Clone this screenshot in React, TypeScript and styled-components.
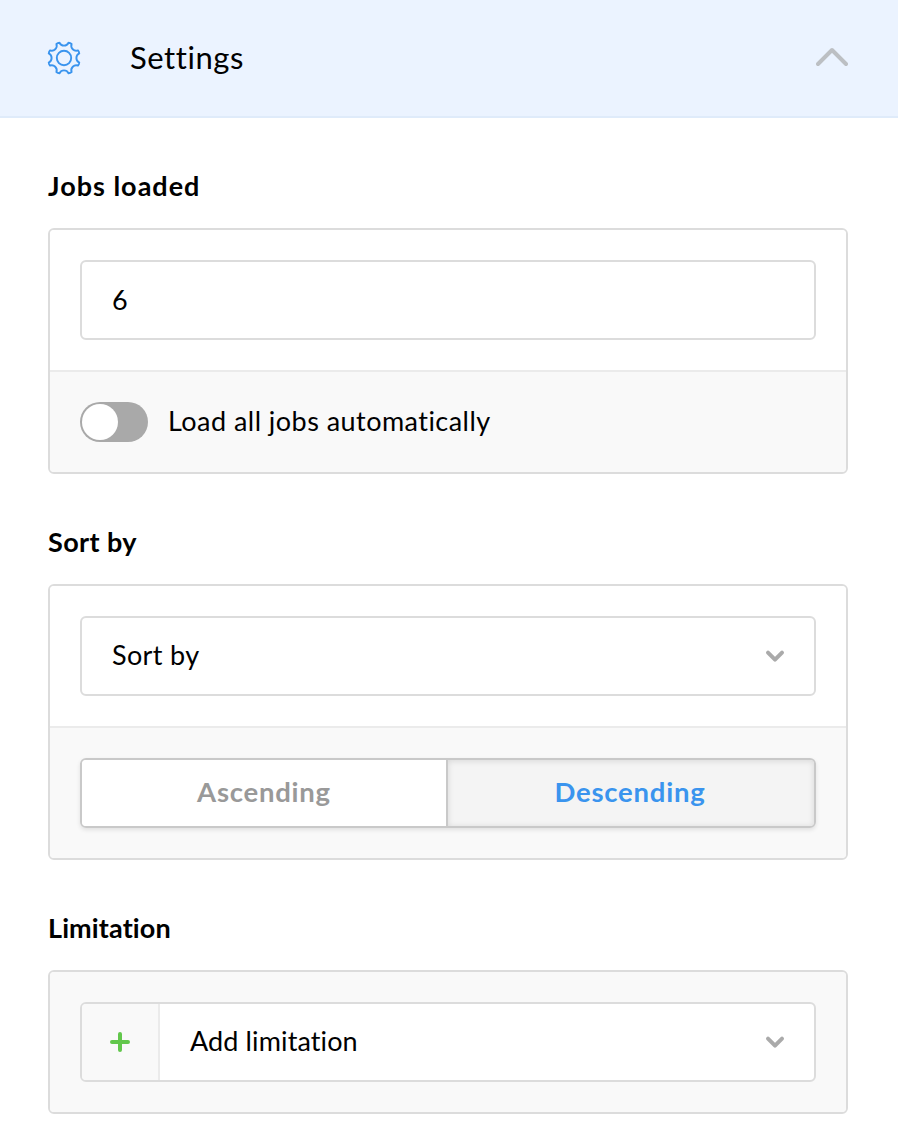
import React, { useState } from 'react';
import styled, { createGlobalStyle } from 'styled-components';

const GlobalStyle = createGlobalStyle`
  *, *::before, *::after { box-sizing: border-box; }
  body {
    margin: 0;
    background: #fff;
    color: #000;
    font-family: Lato, 'Liberation Sans', sans-serif;
    font-size: 27px;
    line-height: 32px;
  }
`;

const Page = styled.main`
  min-height: 1144px;
  background: #fff;
`;

const Header = styled.header`
  display: flex;
  align-items: center;
  height: 118px;
  padding: 0 50px 0 48px;
  background: #ebf3ff;
  border-bottom: 2px solid #dfebfa;
`;

const HeaderTitle = styled.h1`
  flex: 1;
  margin: 0 0 0 50px;
  padding-bottom: 2px;
  font-size: 31px;
  font-weight: 400;
  letter-spacing: 0.55px;
`;

const Content = styled.div`
  padding: 0 50px 0 48px;
`;

const SectionTitle = styled.h2<{ $tracking: number }>`
  display: flex;
  align-items: flex-end;
  height: 110px;
  margin: 0;
  padding-bottom: 26px;
  font-size: 27px;
  font-weight: 700;
  letter-spacing: ${(p) => p.$tracking}px;
`;

const Card = styled.div`
  border: 2px solid #dcdcdc;
  border-radius: 6px;
  overflow: hidden;
`;

const CardRow = styled.div<{ $muted?: boolean; $divided?: boolean }>`
  display: flex;
  align-items: center;
  padding: 30px;
  background: ${(p) => (p.$muted ? '#f9f9f9' : '#fff')};
  border-top: ${(p) => (p.$divided ? '2px solid #ebebeb' : 'none')};
`;

const NumberInput = styled.input`
  width: 100%;
  height: 80px;
  padding: 0 30px 2px;
  border: 2px solid #dcdcdc;
  border-radius: 6px;
  background: #fff;
  color: #000;
  font: inherit;
  outline: none;
`;

const Select = styled.div`
  display: flex;
  align-items: stretch;
  width: 100%;
  height: 80px;
  border: 2px solid #dcdcdc;
  border-radius: 6px;
  background: #fff;
  overflow: hidden;
`;

const SelectAddon = styled.div`
  display: flex;
  align-items: center;
  justify-content: center;
  width: 78px;
  background: #f9f9f9;
  border-right: 2px solid #ebebeb;
`;

const SelectValue = styled.div<{ $tracking: number }>`
  display: flex;
  flex: 1;
  align-items: center;
  justify-content: space-between;
  padding: 0 29px 0 30px;
  letter-spacing: ${(p) => p.$tracking}px;

  span { padding-bottom: 3px; }
`;

const Toggle = styled.button<{ $on: boolean }>`
  display: flex;
  justify-content: ${(p) => (p.$on ? 'flex-end' : 'flex-start')};
  width: 68px;
  height: 40px;
  padding: 2px;
  border: 0;
  border-radius: 20px;
  background: ${(p) => (p.$on ? '#3a94ee' : '#a9a9a9')};
`;

const Knob = styled.span`
  width: 36px;
  height: 36px;
  border-radius: 50%;
  background: #fff;
`;

const ToggleLabel = styled.span`
  margin-left: 20px;
  padding-bottom: 3px;
  letter-spacing: 0.46px;
`;

const ButtonGroup = styled.div`
  display: flex;
  width: 100%;
  height: 70px;
  border: 2px solid #c9c9c9;
  border-radius: 6px;
  overflow: hidden;
  box-shadow: 0 2px 4px rgba(0, 0, 0, 0.1);
`;

const GroupButton = styled.button<{ $active: boolean }>`
  flex: 1 1 0;
  padding: 0 0 3px;
  border: 0;
  background: ${(p) => (p.$active ? '#f4f4f4' : '#fff')};
  color: ${(p) => (p.$active ? '#3a94ee' : '#999')};
  box-shadow: ${(p) => (p.$active ? 'inset 0 1px 6px rgba(0, 0, 0, 0.12)' : 'none')};
  font: inherit;
  font-size: 27.5px;
  font-weight: 700;
  letter-spacing: 0.75px;

  & + & {
    flex: 1 1 2px;
    padding-right: 2px;
    border-left: 2px solid #c9c9c9;
  }
`;

const Icon = styled.svg`
  display: block;
  flex: none;
  fill: none;
  stroke-linecap: round;
  stroke-linejoin: round;
`;

const CollapseArrow = styled(Icon)`
  margin-bottom: 2px;
`;

const SelectArrow = styled(Icon)`
  margin-bottom: 1px;
`;

// One blunt tooth and one circular notch, repeated around the hub.
const gearPath = (() => {
  const at = (r: number, deg: number) => {
    const a = (deg * Math.PI) / 180;
    return `${(16 + r * Math.cos(a)).toFixed(2)} ${(16 + r * Math.sin(a)).toFixed(2)}`;
  };
  let d = `M${at(15.9, 16.5)}`;
  for (let i = 0; i < 8; i++) {
    const tooth = 22.5 + i * 45;
    d += `Q${at(16.4, tooth)} ${at(15.9, tooth + 6)}`;
    d += `A5 5 0 0 0 ${at(15.9, tooth + 39)}`;
  }
  return `${d}Z`;
})();

const GearIcon = () => (
  <Icon width="32" height="32" viewBox="0 0 32 32" stroke="#3a94ee" strokeWidth="1.9" overflow="visible">
    <path d={gearPath} />
    <circle cx="16" cy="16" r="7.2" />
  </Icon>
);

const CollapseIcon = () => (
  <CollapseArrow width="32" height="20" viewBox="0 0 32 20" stroke="#bcbfc3" strokeWidth="4">
    <path d="M2 17 16 3l14 14" />
  </CollapseArrow>
);

const ChevronIcon = () => (
  <SelectArrow width="20" height="14" viewBox="0 0 20 14" stroke="#aaa" strokeWidth="4">
    <path d="m3 3.6 7 7 7-7" />
  </SelectArrow>
);

const PlusIcon = () => (
  <Icon width="20" height="20" viewBox="0 0 20 20" stroke="#62c74c" strokeWidth="4">
    <path d="M10 2v16M2 10h16" />
  </Icon>
);

export default function App() {
  const [count, setCount] = useState('6');
  const [loadAll, setLoadAll] = useState(false);
  const [order, setOrder] = useState('Descending');

  return (
    <Page>
      <GlobalStyle />
      <Header>
        <GearIcon />
        <HeaderTitle>Settings</HeaderTitle>
        <CollapseIcon />
      </Header>
      <Content>
        <SectionTitle $tracking={1}>Jobs loaded</SectionTitle>
        <Card>
          <CardRow>
            <NumberInput value={count} onChange={(e) => setCount(e.target.value)} />
          </CardRow>
          <CardRow $muted $divided>
            <Toggle $on={loadAll} onClick={() => setLoadAll(!loadAll)}>
              <Knob />
            </Toggle>
            <ToggleLabel>Load all jobs automatically</ToggleLabel>
          </CardRow>
        </Card>

        <SectionTitle $tracking={0.4}>Sort by</SectionTitle>
        <Card>
          <CardRow>
            <Select>
              <SelectValue $tracking={0.35}>
                <span>Sort by</span>
                <ChevronIcon />
              </SelectValue>
            </Select>
          </CardRow>
          <CardRow $muted $divided>
            <ButtonGroup>
              {['Ascending', 'Descending'].map((name) => (
                <GroupButton key={name} $active={order === name} onClick={() => setOrder(name)}>
                  {name}
                </GroupButton>
              ))}
            </ButtonGroup>
          </CardRow>
        </Card>

        <SectionTitle $tracking={0.12}>Limitation</SectionTitle>
        <Card>
          <CardRow $muted>
            <Select>
              <SelectAddon>
                <PlusIcon />
              </SelectAddon>
              <SelectValue $tracking={0.12}>
                <span>Add limitation</span>
                <ChevronIcon />
              </SelectValue>
            </Select>
          </CardRow>
        </Card>
      </Content>
    </Page>
  );
}
